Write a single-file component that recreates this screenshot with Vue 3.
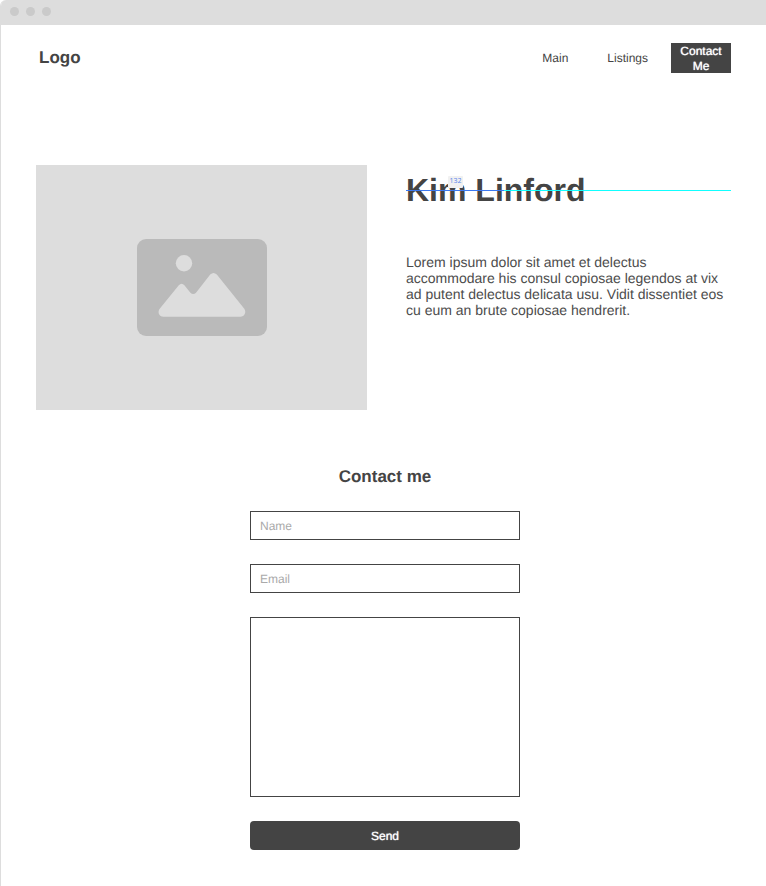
<script setup>
import { ref } from 'vue'

const name = ref('')
const email = ref('')
const message = ref('')
</script>

<template>
  <div class="window">
    <div class="titlebar" aria-hidden="true">
      <span class="dot"></span>
      <span class="dot"></span>
      <span class="dot"></span>
    </div>

    <header class="header">
      <a class="logo" href="#">Logo</a>
      <nav class="nav">
        <a href="#main">Main</a>
        <a href="#listings">Listings</a>
        <a class="nav-button" href="#contact">Contact Me</a>
      </nav>
    </header>

    <main>
      <section id="main" class="profile">
        <div class="photo">
          <svg width="130" height="97" viewBox="0 0 130 97" aria-hidden="true">
            <rect width="130" height="97" rx="9" fill="#bababa" />
            <circle cx="47" cy="24.300" r="8.200" fill="#ddd" />
            <path
              d="M22.700 69.800 L41.800 46.300 Q44.600 43.200 47.400 46.300 L53.200 53.400 Q56.200 56.600 59.200 53.400 L73.200 35.600 Q76.500 32.200 79.800 35.600 L107.300 69.800 C109.700 73.500 107.400 77.700 103.400 77.700 H26.500 C22 77.700 20.200 73.400 22.700 69.800 Z"
              fill="#ddd"
            />
          </svg>
        </div>
        <div class="about">
          <h1 class="person">
            Kim Linford
            <span class="guide" aria-hidden="true"></span>
            <span class="measure" aria-hidden="true">132</span>
          </h1>
          <p class="bio">
            Lorem ipsum dolor sit amet et delectus accommodare his consul copiosae legendos at vix ad
            putent delectus delicata usu. Vidit dissentiet eos cu eum an brute copiosae hendrerit.
          </p>
        </div>
      </section>

      <section id="contact" class="contact">
        <h2 class="contact-title">Contact me</h2>
        <form class="form" @submit.prevent>
          <input v-model="name" class="field" type="text" placeholder="Name" aria-label="Name" />
          <input v-model="email" class="field" type="email" placeholder="Email" aria-label="Email" />
          <textarea v-model="message" class="field message" aria-label="Message"></textarea>
          <button class="send" type="submit">Send</button>
        </form>
      </section>
    </main>
  </div>
</template>

<style>
body {
  background: #fff;
}
</style>

<style scoped>
.window,
.window * {
  box-sizing: border-box;
}

.window {
  min-height: 100vh;
  border-left: 1px solid #ddd;
  border-radius: 6px 0 0 0;
  overflow: hidden;
  font-family: "Liberation Sans", Arial, sans-serif;
  font-size: 12px;
  color: #444;
  text-rendering: geometricPrecision;
}

.titlebar {
  display: flex;
  gap: 7px;
  height: 25px;
  padding: 7px 9px;
  background: #ddd;
}

.dot {
  width: 9px;
  height: 9px;
  border-radius: 50%;
  background: #cacaca;
}

.header {
  display: flex;
  align-items: center;
  justify-content: space-between;
  padding: 18px 35px 0 38px;
}

.logo {
  font-size: 17px;
  font-weight: bold;
}

.header a {
  color: #444;
  text-decoration: none;
}

.nav {
  display: flex;
  align-items: center;
}

.nav a + a {
  margin-left: 39px;
}

.header .nav a.nav-button {
  width: 60px;
  height: 30px;
  margin-left: 23px;
  padding: 1px 8px 0;
  background: #444;
  color: #fff;
  line-height: 15px;
  text-align: center;
  text-shadow: 0 0 1px #fff;
}

.profile {
  display: grid;
  grid-template-columns: 331fr 325fr;
  gap: 39px;
  padding: 92px 35px 0;
}

.photo {
  display: flex;
  align-items: center;
  justify-content: center;
  height: 245px;
  background: #ddd;
}

.about {
  padding-top: 7px;
}

.person {
  position: relative;
  margin: 0;
  font-size: 32px;
  line-height: 36px;
}

.guide {
  position: absolute;
  top: 18px;
  left: 0;
  width: 100%;
  height: 1px;
  background: linear-gradient(to right, #3b78f0 30%, #1ff 30%);
}

.measure {
  position: absolute;
  top: 4px;
  left: 42px;
  width: 15px;
  border-radius: 1px;
  background: #f1f1f1;
  color: #5b86ec;
  font-family: "Open Sans", sans-serif;
  font-size: 7px;
  font-weight: normal;
  line-height: 12px;
  text-align: center;
}

.bio {
  margin: 46px 0 0;
  color: #4c4c4c;
  font-size: 14px;
  line-height: 16px;
}

.contact {
  padding: 57px 35px 36px 38px;
}

.contact-title {
  margin: 0 0 24px;
  font-size: 17px;
  line-height: 20px;
  text-align: center;
}

.form {
  display: flex;
  flex-direction: column;
  gap: 24px;
  max-width: 270px;
  margin: 0 auto;
}

.field {
  width: 100%;
  height: 29px;
  margin: 0;
  padding: 0 9px;
  border: 1px solid #444;
  border-radius: 0;
  background: #fff;
  color: #444;
  font: inherit;
  text-rendering: inherit;
}

.field::placeholder {
  color: #aaa;
  opacity: 1;
}

.message {
  display: block;
  height: 180px;
  padding: 8px 9px;
  resize: none;
}

.send {
  height: 29px;
  padding: 0;
  border: 0;
  border-radius: 4px;
  background: #444;
  color: #fff;
  font: inherit;
  text-rendering: inherit;
  text-shadow: 0 0 1px #fff;
}
</style>
